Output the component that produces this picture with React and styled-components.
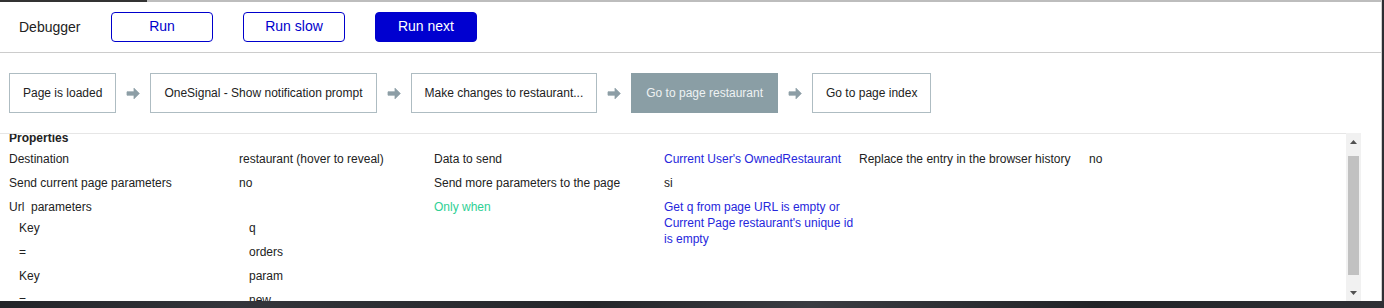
import { Fragment, useLayoutEffect, useRef } from "react";
import styled, { createGlobalStyle } from "styled-components";

const GlobalStyle = createGlobalStyle`
  html, body {
    margin: 0;
    padding: 0;
  }
  body {
    background: linear-gradient(100deg, #1f2024 0%, #34353b 20%, #25262a 45%, #3b3c42 60%, #222327 80%, #2f3035 100%);
    font-family: "Liberation Sans", Arial, sans-serif;
    min-height: 308px;
  }
`;

const Panel = styled.div`
  box-sizing: border-box;
  width: 1382px;
  height: 301px;
  background: #fff;
  border-right: 1px solid #d0d0d0;
  display: flex;
  flex-direction: column;
`;

const Progress = styled.div`
  height: 2px;
  background: linear-gradient(to right, #333 0, #333 147px, #bdbdbd 147px);
`;

const Header = styled.div`
  height: 50px;
  display: flex;
  align-items: center;
  gap: 30px;
  padding-left: 19px;
  border-bottom: 1px solid #cccccc;
`;

const Title = styled.div`
  width: 62px;
  font-size: 14px;
  color: #222;
  margin-top: -1px;
`;

const Button = styled.button`
  box-sizing: border-box;
  width: 102px;
  height: 30px;
  padding: 0 0 2px;
  border-radius: 4px;
  border: 1px solid #0000cc;
  background: ${(p) => (p.$primary ? "#0000d0" : "#fff")};
  color: ${(p) => (p.$primary ? "#fff" : "#0000cc")};
  font-family: "Liberation Sans", Arial, sans-serif;
  font-size: 14px;
  cursor: pointer;
`;

const Flow = styled.div`
  display: flex;
  align-items: center;
  padding: 20px 0 20px 9px;
`;

const Step = styled.div`
  box-sizing: border-box;
  height: 40px;
  display: flex;
  align-items: center;
  padding: 0 ${(p) => (p.$active ? "14px" : "13px")};
  border: 1px solid ${(p) => (p.$active ? "#8a9ea5" : "#aebcc2")};
  background: ${(p) => (p.$active ? "#8a9ea5" : "#fff")};
  color: ${(p) => (p.$active ? "#eef2f3" : "#222")};
  font-size: 12px;
  white-space: nowrap;
`;

const ArrowWrap = styled.div`
  width: 34px;
  display: flex;
  justify-content: center;
`;

const Arrow = () => (
  <ArrowWrap>
    <svg width="14" height="13" viewBox="0 0 14 13">
      <path d="M1 4.8h7V1.2l5.3 5.3L8 11.8V8.2H1z" fill="#8d9ea6" stroke="#8d9ea6" strokeWidth="0.8" strokeLinejoin="round" />
    </svg>
  </ArrowWrap>
);

const PropsArea = styled.div`
  display: flex;
  height: 168px;
  margin-right: 20px;
`;

const Scroller = styled.div`
  flex: 1;
  border-top: 1px solid #e6e6e6;
  overflow: hidden;
  font-size: 12px;
  color: #222;
`;

const ScrollBar = styled.div`
  width: 15px;
  background: #f1f1f1;
  display: flex;
  flex-direction: column;
  align-items: center;
`;

const ScrollButton = styled.div`
  height: 17px;
  width: 15px;
  display: flex;
  align-items: center;
  justify-content: center;
`;

const Thumb = styled.div`
  width: 11px;
  height: 119px;
  margin-top: ${(p) => p.$offset}px;
  background: #c1c1c1;
`;

const Track = styled.div`
  flex: 1;
  display: flex;
  flex-direction: column;
  align-items: center;
`;

const Triangle = ({ up }) => (
  <svg width="7" height="4" viewBox="0 0 7 4">
    <path d={up ? "M0 4L3.5 0L7 4z" : "M0 0L3.5 4L7 0z"} fill="#505050" />
  </svg>
);

const Heading = styled.div`
  padding: 4px 0 1px 9px;
  line-height: 16px;
  font-weight: bold;
`;

const Grid = styled.div`
  display: grid;
  grid-template-columns: 230px 195px 230px 195px 230px 1fr;
  padding-left: 9px;
  align-items: start;
`;

const Cell = styled.div`
  padding: 4px 0;
  line-height: 16px;
  color: ${(p) => (p.$tone === "blue" ? "#2626dc" : p.$tone === "green" ? "#2fd095" : "#222")};
  grid-column: ${(p) => p.$span || "auto"};
`;

const Block = styled.div`
  grid-column: 1 / 3;
`;

const UrlLabel = styled.div`
  padding-top: 4px;
  line-height: 16px;
`;

const Nested = styled.div`
  display: grid;
  grid-template-columns: 230px 195px;
  padding-left: 10px;
  margin-top: 1px;
  padding-bottom: 4px;
`;

const nested = [
  ["Key", "q"],
  ["=", "orders"],
  ["Key", "param"],
  ["=", "new"],
];

export default function App() {
  const ref = useRef(null);
  useLayoutEffect(() => {
    if (ref.current) ref.current.scrollTop = 8;
  }, []);

  return (
    <>
      <GlobalStyle />
      <Panel>
        <Progress />
        <Header>
          <Title>Debugger</Title>
          <Button>Run</Button>
          <Button>Run slow</Button>
          <Button $primary>Run next</Button>
        </Header>
        <Flow>
          <Step>Page is loaded</Step>
          <Arrow />
          <Step>OneSignal - Show notification prompt</Step>
          <Arrow />
          <Step>Make changes to restaurant...</Step>
          <Arrow />
          <Step $active>Go to page restaurant</Step>
          <Arrow />
          <Step>Go to page index</Step>
        </Flow>
        <PropsArea>
          <Scroller ref={ref}>
            <Heading>Properties</Heading>
            <Grid>
              <Cell>Destination</Cell>
              <Cell>restaurant (hover to reveal)</Cell>
              <Cell>Data to send</Cell>
              <Cell $tone="blue">Current User's OwnedRestaurant</Cell>
              <Cell>Replace the entry in the browser history</Cell>
              <Cell>no</Cell>

              <Cell>Send current page parameters</Cell>
              <Cell>no</Cell>
              <Cell>Send more parameters to the page</Cell>
              <Cell $span="4 / 7">si</Cell>

              <Block>
                <UrlLabel>Url&nbsp; parameters</UrlLabel>
                <Nested>
                  {nested.map(([k, v], i) => (
                    <Fragment key={i}>
                      <Cell>{k}</Cell>
                      <Cell>{v}</Cell>
                    </Fragment>
                  ))}
                </Nested>
              </Block>
              <Cell $tone="green">Only when</Cell>
              <Cell $tone="blue">
                Get q from page URL is empty or Current Page restaurant's unique id is empty
              </Cell>
            </Grid>
          </Scroller>
          <ScrollBar>
            <ScrollButton>
              <Triangle up />
            </ScrollButton>
            <Track>
              <Thumb $offset={6} />
            </Track>
            <ScrollButton>
              <Triangle />
            </ScrollButton>
          </ScrollBar>
        </PropsArea>
      </Panel>
    </>
  );
}
